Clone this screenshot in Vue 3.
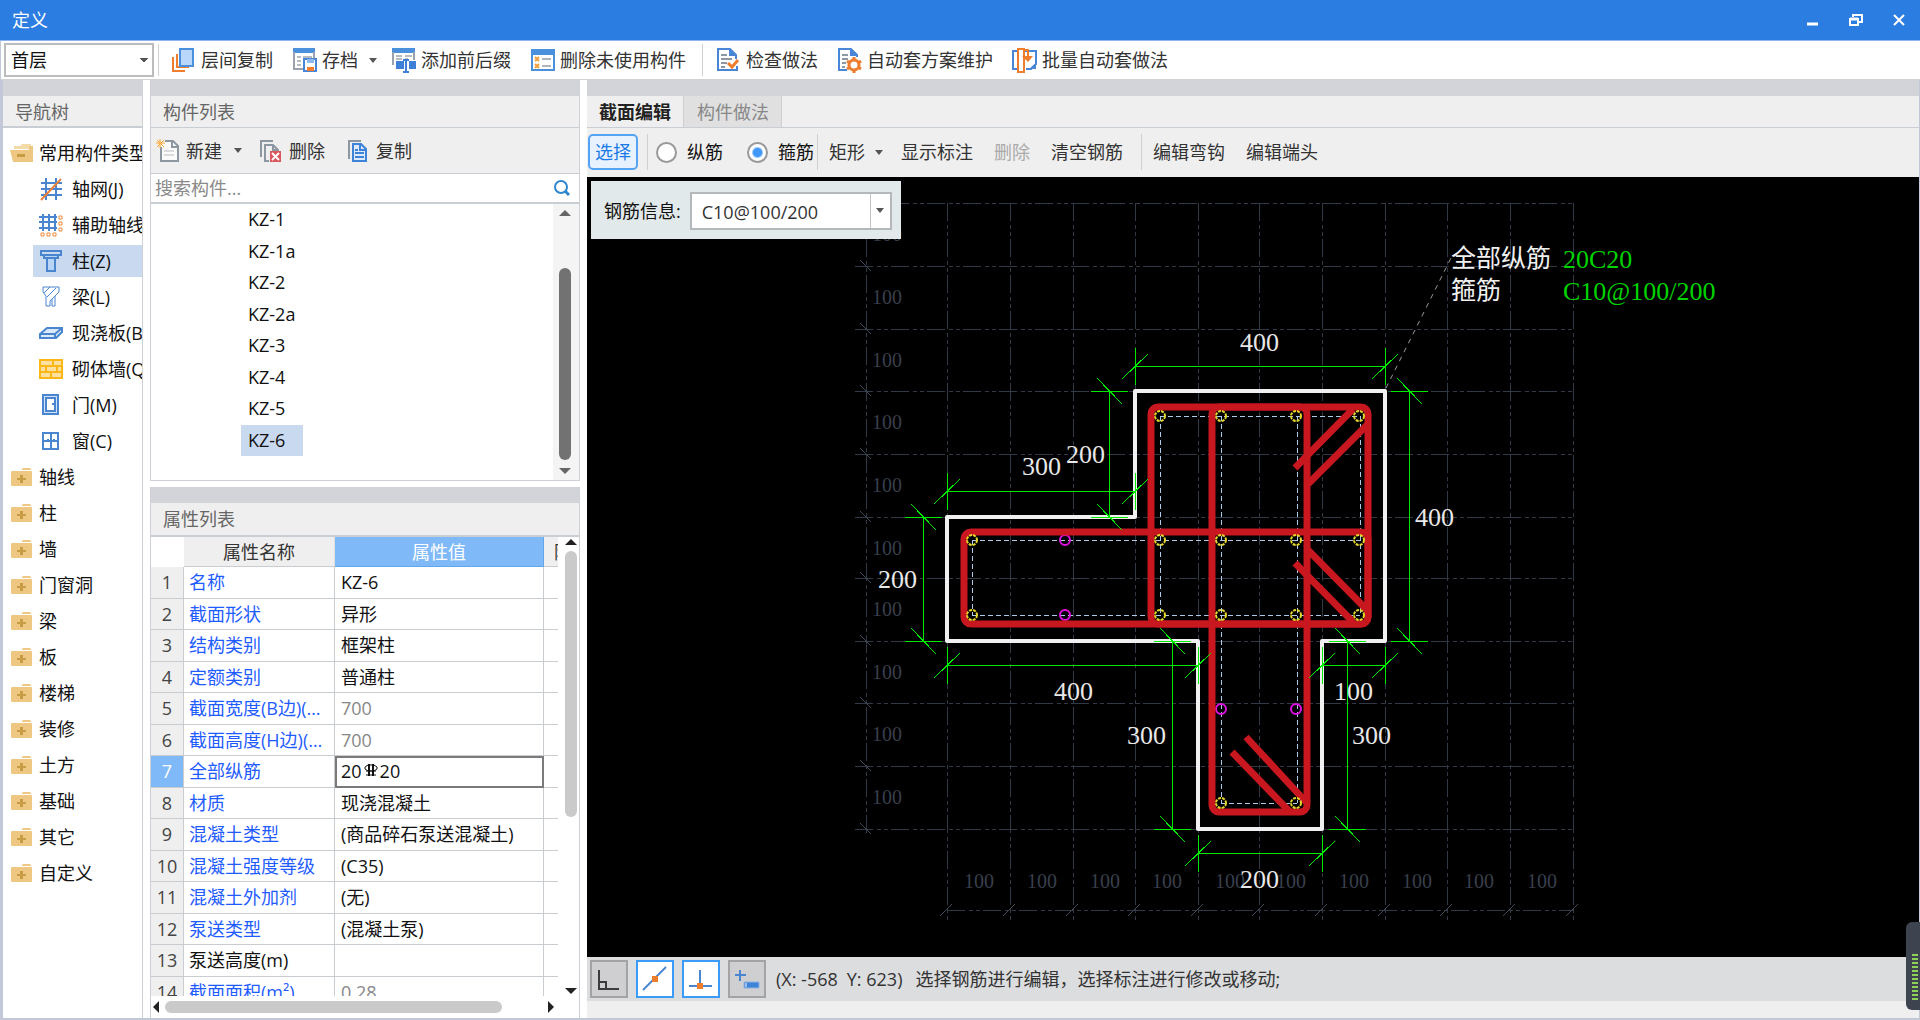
<script setup>
import { ref } from 'vue'

const barMode = ref('stirrup')
const floor = ref('首层')
const keyword = ref('')
const rebarInfo = ref('C10@100/200')

const commonTypes = [
  { icon: 'grid', label: '轴网(J)' },
  { icon: 'auxgrid', label: '辅助轴线(O)' },
  { icon: 'column', label: '柱(Z)', selected: true },
  { icon: 'beam', label: '梁(L)' },
  { icon: 'slab', label: '现浇板(B)' },
  { icon: 'wall', label: '砌体墙(Q)' },
  { icon: 'door', label: '门(M)' },
  { icon: 'window', label: '窗(C)' },
]
const groups = ['轴线', '柱', '墙', '门窗洞', '梁', '板', '楼梯', '装修', '土方', '基础', '其它', '自定义']

const components = ['KZ-1', 'KZ-1a', 'KZ-2', 'KZ-2a', 'KZ-3', 'KZ-4', 'KZ-5', 'KZ-6']

const properties = [
  { name: '名称', value: 'KZ-6' },
  { name: '截面形状', value: '异形' },
  { name: '结构类别', value: '框架柱' },
  { name: '定额类别', value: '普通柱' },
  { name: '截面宽度(B边)(mm)', value: '700', muted: true },
  { name: '截面高度(H边)(mm)', value: '700', muted: true },
  { name: '全部纵筋', value: '', rebar: ['20', '20'], active: true },
  { name: '材质', value: '现浇混凝土' },
  { name: '混凝土类型', value: '(商品碎石泵送混凝土)' },
  { name: '混凝土强度等级', value: '(C35)' },
  { name: '混凝土外加剂', value: '(无)' },
  { name: '泵送类型', value: '(混凝土泵)' },
  { name: '泵送高度(m)', value: '', plain: true },
  { name: '截面面积(m²)', value: '0.28', muted: true },
]

// Section drawing, in window pixels
const gridX = [947, 1010, 1073, 1135, 1198, 1259, 1322, 1385, 1447, 1510, 1573]
const gridY = [203, 266, 329, 391, 454, 517, 578, 641, 703, 766, 829]

const horizontalDims = [
  { y: 366, a: 1135, b: 1385 },
  { y: 491, a: 947, b: 1135 },
  { y: 665, a: 947, b: 1198 },
  { y: 665, a: 1322, b: 1385 },
  { y: 853, a: 1198, b: 1322 },
]
const verticalDims = [
  { x: 1109, a: 391, b: 517 },
  { x: 923, a: 517, b: 641 },
  { x: 1172, a: 641, b: 829 },
  { x: 1347, a: 641, b: 829 },
  { x: 1409, a: 391, b: 641 },
]
const dimTexts = [
  { x: 1240, y: 351, t: '400' },
  { x: 1066, y: 463, t: '200' },
  { x: 1022, y: 475, t: '300' },
  { x: 878, y: 588, t: '200' },
  { x: 1054, y: 700, t: '400' },
  { x: 1127, y: 744, t: '300' },
  { x: 1334, y: 700, t: '100' },
  { x: 1352, y: 744, t: '300' },
  { x: 1240, y: 888, t: '200' },
  { x: 1415, y: 526, t: '400' },
]
const cornerBars = [
  [1160, 416], [1221, 416], [1296, 416], [1359, 416],
  [972, 540], [1160, 540], [1221, 540], [1296, 540], [1359, 540],
  [972, 615], [1160, 615], [1221, 615], [1296, 615], [1359, 615],
  [1221, 803], [1296, 803],
]
const edgeBars = [[1065, 540], [1065, 615], [1221, 709], [1296, 709]]
</script>

<template>
  <div class="window">
    <header class="titlebar">
      <h1>定义</h1>
      <div class="win-buttons">
        <button type="button" aria-label="最小化">
          <svg width="14" height="14"><path d="M1 11h11" stroke="#fff" stroke-width="3" /></svg>
        </button>
        <button type="button" aria-label="还原">
          <svg width="14" height="14" fill="none" stroke="#fff" stroke-width="2"><path d="M4 4V2h9v7h-3M1 6h8v6H1z" /><path d="M1 6h8" stroke-width="3" /></svg>
        </button>
        <button type="button" aria-label="关闭">
          <svg width="14" height="14"><path d="M2 2l10 10M12 2L2 12" stroke="#fff" stroke-width="2" /></svg>
        </button>
      </div>
    </header>

    <nav class="toolbar">
      <select v-model="floor" class="floor" aria-label="楼层"><option>首层</option></select>
      <i class="sep first"></i>
      <button type="button" class="tool">
        <svg width="26" height="26" fill="none"><path d="M2 10v14h12M6 7v13h12" stroke="#ee7d2e" stroke-width="2" /><rect x="9" y="2" width="13" height="17" fill="#b9d7fb" stroke="#4a90dd" stroke-width="2" /></svg>
        层间复制
      </button>
      <button type="button" class="tool has-arrow">
        <svg width="26" height="26" fill="none"><path d="M1 1h22v5H1z" fill="#4a90dd" /><path d="M2 5v17h10M22 5v6" stroke="#9aa3ad" stroke-width="2" /><path d="M5 10h4M11 10h9M5 14h4M5 18h4" stroke="#b5bcc4" stroke-width="2" /><path d="M12 12h12v12H12z" fill="#fff" stroke="#4a86d8" stroke-width="2" /><path d="M15 12h7v4h-7z" fill="#8fb9ee" /><path d="M15 20h7v4h-7z" fill="#ee7d2e" /></svg>
        存档
        <i class="arrow"></i>
      </button>
      <button type="button" class="tool">
        <svg width="26" height="26" fill="none"><path d="M1 1h23v5H1z" fill="#4a90dd" /><path d="M2 5v13M23 5v8" stroke="#9aa3ad" stroke-width="2" /><path d="M5 9h6M5 12h6M14 9h7M14 12h3" stroke="#b5bcc4" stroke-width="2" /><path d="M5 14h8v8H5zM18 14h7v8h-7z" fill="#3d80d6" /><path d="M15 13v12M12 13h6M12 25h6" stroke="#3d80d6" stroke-width="2" /></svg>
        添加前后缀
      </button>
      <button type="button" class="tool">
        <svg width="26" height="26" fill="none"><path d="M2 3h22v20H2z" fill="#fff" stroke="#4a90dd" stroke-width="2" /><path d="M1 2h24v6H1z" fill="#4a90dd" /><path d="M5 10l4 4M9 10l-4 4M5 17l4 4M9 17l-4 4" stroke="#f2a13c" stroke-width="2" /><path d="M12 12h9M12 19h9" stroke="#aeb5bd" stroke-width="2" /></svg>
        删除未使用构件
      </button>
      <i class="sep"></i>
      <button type="button" class="tool">
        <svg width="26" height="26" fill="none"><path d="M20 12V8l-6-6H2v21h19v-4" stroke="#4a86d8" stroke-width="2" /><path d="M13 1l8 8h-8z" fill="#4a86d8" /><path d="M5 8h6M5 12h11M5 16h6M5 20h4" stroke="#8e98a5" stroke-width="2" /><path d="M12 16l4 4 6-7" stroke="#ee7d2e" stroke-width="3" /></svg>
        检查做法
      </button>
      <button type="button" class="tool">
        <svg width="26" height="26" fill="none"><path d="M20 10V8l-6-6H2v21h8" stroke="#4a86d8" stroke-width="2" /><path d="M13 1l8 8h-8z" fill="#4a86d8" /><path d="M5 8h6M5 12h6M5 16h4M5 20h3" stroke="#8e98a5" stroke-width="2" /><circle cx="17" cy="18" r="5" stroke="#ee7d2e" stroke-width="3" /><path d="M17 10v3M17 23v3M10 14l3 2M21 20l3 2M10 22l3-2M21 16l3-2" stroke="#ee7d2e" stroke-width="3" /></svg>
        自动套方案维护
      </button>
      <button type="button" class="tool">
        <svg width="26" height="26" fill="none"><path d="M5 4H1v18h4M12 4h12v13l-5 5h-5" stroke="#4a86d8" stroke-width="2" /><path d="M24 16v6h-7z" fill="#4a86d8" /><path d="M6 2h6v23H6zM12 3h4v8" stroke="#ee7d2e" stroke-width="2" /><path d="M10 9h11l-5 6z" fill="#ee7d2e" /></svg>
        批量自动套做法
      </button>
    </nav>

    <main class="body">
      <aside class="nav-panel">
        <div class="band"></div>
        <h2 class="panel-title thick">导航树</h2>
        <ul class="tree">
          <li class="group">
            <svg width="26" height="20"><path d="M5 6V3l6 0 2-2h9v5z" fill="#f3dba8" /><path d="M1 7h19V3h4v16H4z" fill="#eec883" /><path d="M8 11h8v3H8z" fill="#c89b45" /></svg>
            常用构件类型
          </li>
          <li v-for="t in commonTypes" :key="t.label" class="child">
            <span :class="['node', { selected: t.selected }]">
              <svg width="24" height="24" fill="none" stroke="#4a86d0" stroke-width="2">
                <g v-if="t.icon === 'grid'"><path d="M7 1v22M17 1v22M2 6h21M2 12h21M2 18h21" /><path d="M2 23L22 2" stroke="#e8803c" /></g>
                <g v-else-if="t.icon === 'auxgrid'"><path d="M4 1v17M10 1v17M16 1v17M0 4h18M0 9h18M0 15h18" /><path d="M20 3h3v3h-3zM20 9h3v3h-3zM20 15h3v3h-3zM2 20h3v3H2zM8 20h3v3H8zM14 20h3v3h-3z" stroke="#ee8a3c" stroke-width="1" /></g>
                <g v-else-if="t.icon === 'column'"><path d="M2 2h20v4H2z" /><path d="M5 6h14v3H5zM8 9h8v13H8z" fill="#b9d5f5" /></g>
                <g v-else-if="t.icon === 'beam'" stroke-width="1"><path d="M4 2h16v5l-4 4v10h-3v-7l-2 2v5H7V11L4 7z" /><path d="M5 8l6-6M8 12l9-9M11 16l9-9" /></g>
                <g v-else-if="t.icon === 'slab'"><path d="M1 13l7-6h15v4l-6 6H1z" fill="#dbe9fa" /><path d="M1 13h15l7-6M16 13v4" /></g>
                <g v-else-if="t.icon === 'wall'" stroke="#fbb717"><path d="M1 3h22v18H1z" fill="#fbe0a0" /><path d="M1 9h22M1 15h22M14 3v6M7 9v6M18 9v6M12 15v6" /></g>
                <g v-else-if="t.icon === 'door'"><path d="M4 2h15v19H4z" fill="#cfe2f9" /><path d="M7 5h9v13H7z" fill="#fff" /><path d="M13 11h2" /></g>
                <g v-else><path d="M4 4h15v16H4zM12 4v16M4 12h15" /><path d="M8 11h2M14 11h2" /></g>
              </svg>
              {{ t.label }}
            </span>
          </li>
          <li v-for="g in groups" :key="g" class="group">
            <svg width="26" height="20"><path d="M13 3V2l1-1h7l1 1v1z" fill="#eec883" /><rect x="2" y="4" width="21" height="15" rx="1" fill="#eec883" /><path d="M11 8h3v3h3v2h-3v3h-3v-3H8v-2h3z" fill="#c89b45" /></svg>
            {{ g }}
          </li>
        </ul>
      </aside>

      <section class="middle">
        <div class="list-panel">
          <div class="band"></div>
          <h2 class="panel-title">构件列表</h2>
          <div class="list-tools">
            <button type="button">
              <svg width="24" height="24" fill="none"><path d="M5 8v14h17V7l-5-5h-8" fill="#fafafa" stroke="#8d97a2" stroke-width="2" /><path d="M16 2v6h6" stroke="#8d97a2" stroke-width="2" /><path d="M8 12h10M8 16h10" stroke="#d8dadd" stroke-width="2" /><path d="M1 1l7 7M8 1L1 8M0 4h9M4 0v9" stroke="#fba52c" stroke-width="1" /></svg>
              新建
              <i class="arrow"></i>
            </button>
            <button type="button">
              <svg width="24" height="24" fill="none" stroke="#8d97a2" stroke-width="2"><path d="M2 18V2h12" /><path d="M10 22H6V6h8l5 5v2M14 6v5h5" /><path d="M11 12h11v11H11z" fill="#d9575c" stroke="none" /><path d="M13 14l7 7M20 14l-7 7" stroke="#fff" /></svg>
              删除
            </button>
            <button type="button">
              <svg width="24" height="24" fill="none"><path d="M3 20V2h12" stroke="#8d97a2" stroke-width="2" /><path d="M7 5h8l5 5v12H7z" fill="#dceafb" stroke="#3f83d8" stroke-width="2" /><path d="M14 5v6h6" stroke="#3f83d8" stroke-width="2" /><path d="M9 11h3M9 14h9M9 18h9" stroke="#3f83d8" stroke-width="2" /></svg>
              复制
            </button>
          </div>
          <div class="search">
            <input v-model="keyword" type="text" placeholder="搜索构件..." aria-label="搜索构件">
            <svg width="18" height="18" fill="none" stroke="#2f86cf" stroke-width="2"><circle cx="8" cy="8" r="6" /><path d="M12 12l4 4" stroke-width="3" /></svg>
          </div>
          <div class="list-area">
            <ul class="list">
              <li v-for="c in components" :key="c"><span :class="{ selected: c === 'KZ-6' }">{{ c }}</span></li>
            </ul>
            <div class="vbar list-bar">
              <i class="up"></i>
              <i class="thumb"></i>
              <i class="down"></i>
            </div>
          </div>
        </div>

        <div class="prop-panel">
          <div class="band"></div>
          <h2 class="panel-title thick">属性列表</h2>
          <div class="prop-main">
            <div class="prop-clip">
              <table>
                <colgroup><col class="c-num"><col class="c-name"><col class="c-value"><col class="c-extra"></colgroup>
                <thead>
                  <tr><th class="corner"></th><th>属性名称</th><th class="current">属性值</th><th class="extra">附加</th></tr>
                </thead>
                <tbody>
                  <tr v-for="(p, i) in properties" :key="p.name" :class="{ active: p.active }">
                    <th scope="row">{{ i + 1 }}</th>
                    <td :class="['name', { plain: p.plain }]">{{ p.name }}</td>
                    <td :class="['value', { muted: p.muted }]">
                      <div v-if="p.rebar" class="rebar">{{ p.rebar[0] }}<svg width="18" height="14" fill="none" stroke="#111"><path d="M6 2h6l3 2v2l-3 2H6L3 6V4z" /><path d="M7 1v12M11 1v12" stroke-width="2" /><path d="M4 8h10M4 12h10" /></svg>{{ p.rebar[1] }}</div>
                      <template v-else>{{ p.value }}</template>
                    </td>
                    <td></td>
                  </tr>
                </tbody>
              </table>
            </div>
            <div class="vbar prop-bar">
              <i class="up"></i>
              <i class="thumb"></i>
              <i class="down"></i>
            </div>
          </div>
          <div class="hbar">
            <i class="left"></i>
            <i class="thumb"></i>
            <i class="right"></i>
          </div>
        </div>
      </section>

      <section class="editor">
        <div class="band"></div>
        <div class="tabs">
          <button type="button" class="on">截面编辑</button>
          <button type="button" class="off">构件做法</button>
        </div>
        <div class="edit-tools">
          <button type="button" class="pick">选择</button>
          <i class="sep"></i>
          <label class="radio"><input v-model="barMode" type="radio" name="bar" value="long">纵筋</label>
          <label class="radio"><input v-model="barMode" type="radio" name="bar" value="stirrup">箍筋</label>
          <i class="sep tight"></i>
          <button type="button" class="shape">矩形<i class="arrow"></i></button>
          <button type="button">显示标注</button>
          <button type="button" disabled>删除</button>
          <button type="button">清空钢筋</button>
          <i class="sep wide"></i>
          <button type="button">编辑弯钩</button>
          <button type="button">编辑端头</button>
        </div>

        <div class="canvas">
          <svg class="drawing" width="100%" height="100%" fill="none">
            <g transform="translate(-587 -177)">
              <g class="grid-lines">
                <path v-for="x in gridX" :key="'x' + x" :d="`M${x} 203V921`" />
                <path v-for="y in gridY" :key="'y' + y" :d="`M855 ${y}H1573`" />
                <path d="M866 203V833M947 910H1573" />
              </g>
              <g class="grid-ticks">
                <path v-for="y in gridY" :key="'ty' + y" :d="`M860 ${y - 6}l11 11`" />
                <path v-for="x in gridX" :key="'tx' + x" :d="`M${x - 7} 916l12 -12`" />
              </g>
              <g class="grid-text">
                <text v-for="y in gridY.slice(0, 10)" :key="'gy' + y" x="872" :y="y + 38">100</text>
                <text v-for="x in gridX.slice(0, 10)" :key="'gx' + x" :x="x + 17" y="888">100</text>
              </g>

              <path class="leader" d="M1386 388L1451 258" />
              <path class="outline" d="M1135 391H1385V641H1322V829H1198V641H947V517H1135Z" />

              <g class="bar-lines">
                <path d="M1160 416H1360M972 540H1360M972 615H1360M1221 803H1297" />
                <path d="M972 540V615M1160 416V615M1221 416V803M1297 416V803M1360 416V615" />
              </g>
              <g class="edge-bars"><circle v-for="b in edgeBars" :key="b.join()" :cx="b[0]" :cy="b[1]" r="5" /></g>

              <g class="stirrups">
                <rect x="1151" y="407" width="217" height="217" rx="7" />
                <rect x="964" y="532" width="404" height="92" rx="7" />
                <rect x="1212" y="407" width="95" height="405" rx="7" />
                <path d="M1353 409L1295 468M1367 425L1308 484" />
                <path d="M1308 550L1367 610M1295 563L1353 622" />
                <path d="M1246 737L1306 802M1232 752L1290 812" />
              </g>
              <g class="corner-bars"><circle v-for="b in cornerBars" :key="b.join()" :cx="b[0]" :cy="b[1]" r="5" /></g>

              <g class="dims">
                <path v-for="d in horizontalDims" :key="'h' + d.y + d.a" :d="`M${d.a} ${d.y}H${d.b}M${d.a} ${d.y - 18}v37M${d.b} ${d.y - 18}v37M${d.a - 13} ${d.y + 13}l26 -25M${d.b - 13} ${d.y + 13}l26 -25`" />
                <path v-for="d in verticalDims" :key="'v' + d.x" :d="`M${d.x} ${d.a}V${d.b}M${d.x - 18} ${d.a}h37M${d.x - 18} ${d.b}h37M${d.x - 12} ${d.a - 13}l25 26M${d.x - 12} ${d.b - 13}l25 26`" />
              </g>
              <g class="dim-text"><text v-for="d in dimTexts" :key="d.x + '-' + d.y" :x="d.x" :y="d.y">{{ d.t }}</text></g>
              <g class="note-label"><text x="1451" y="267">全部纵筋</text><text x="1451" y="299">箍筋</text></g>
              <g class="note-value"><text x="1563" y="268">20C20</text><text x="1563" y="300">C10@100/200</text></g>
            </g>
          </svg>
          <form class="info" @submit.prevent>
            <label for="rebar-info">钢筋信息:</label>
            <div class="combo">
              <input id="rebar-info" v-model="rebarInfo" type="text">
              <button type="button" aria-label="展开"><i class="arrow"></i></button>
            </div>
          </form>
        </div>

        <footer class="status">
          <button type="button" aria-label="正交">
            <svg width="32" height="32" fill="none" stroke="#3c3c3c" stroke-width="2"><path d="M6 7v19h20M6 19h7v7" /></svg>
          </button>
          <button type="button" class="on" aria-label="最近点">
            <svg width="32" height="32" fill="none"><path d="M4 27L27 4" stroke="#4a86d0" stroke-width="2" /><rect x="13" y="13" width="6" height="6" fill="#ee7d2e" /></svg>
          </button>
          <button type="button" class="on" aria-label="垂点">
            <svg width="32" height="32" fill="none"><path d="M15 7v16M4 23h23" stroke="#4a86d0" stroke-width="2" /><rect x="12" y="20" width="6" height="6" fill="#ee7d2e" /></svg>
          </button>
          <button type="button" aria-label="动态输入">
            <svg width="32" height="32" fill="none"><path d="M9 7v11M4 12h11" stroke="#4a86d0" stroke-width="2" /><path d="M13 19h15v6H13z" fill="#3f83d8" stroke="#8fb4e2" /><path d="M15 20v4" stroke="#fff" /></svg>
          </button>
          <p><span>(X: -568</span><span>Y: 623)</span></p>
          <span>选择钢筋进行编辑，选择标注进行修改或移动;</span>
        </footer>
      </section>
    </main>

    <div class="meter"><i></i></div>
  </div>
</template>

<style>
body {
  margin: 0;
}
</style>

<style scoped>
.window {
  position: relative;
  display: flex;
  flex-direction: column;
  box-sizing: border-box;
  height: 100vh;
  min-height: 640px;
  overflow: hidden;
  background: #fff;
  color: #111;
  font: 18px/24px "Open Sans", "Noto Sans CJK SC", sans-serif;
}
.window *,
.window *::before {
  box-sizing: border-box;
}
ul {
  margin: 0;
  padding: 0;
  list-style: none;
}
button {
  display: flex;
  align-items: center;
  margin: 0;
  padding: 0;
  border: 0;
  background: none;
  color: #333;
  font: inherit;
  white-space: nowrap;
}
input,
select {
  margin: 0;
  font: inherit;
  color: inherit;
}
svg {
  display: block;
  flex: none;
}
.arrow {
  width: 0;
  border: 4px solid transparent;
  border-top: 5px solid #555;
  border-bottom: 0;
}

.titlebar {
  display: flex;
  flex: none;
  align-items: center;
  justify-content: space-between;
  height: 41px;
  padding: 0 14px 0 12px;
  border-bottom: 1px solid #8fb6ea;
  background: #2b7de1;
  color: #fff;
}
.titlebar h1 {
  margin: 0;
  font-size: 18px;
  font-weight: 400;
}
.win-buttons {
  display: flex;
  gap: 29px;
}

.toolbar {
  display: flex;
  flex: none;
  align-items: center;
  height: 39px;
  padding-left: 3px;
  border-bottom: 1px solid #d0d2d6;
  border-left: 1px solid #c2c8d8;
}
.floor {
  width: 150px;
  height: 34px;
  padding: 0 5px;
  border: 2px solid #bcbcbc;
  border-radius: 0;
  appearance: none;
  background:
    linear-gradient(to top right, transparent 50%, #555 50%) 134px 13px / 4px 5px no-repeat,
    linear-gradient(to top left, transparent 50%, #555 50%) 138px 13px / 4px 5px no-repeat,
    #fff;
}
.sep {
  flex: none;
  width: 1px;
  height: 32px;
  margin: 0 4px 0 5px;
  background: #d0d0d0;
}
.toolbar .sep {
  margin: 0 7px 0 3px;
}
.toolbar .sep.first {
  margin: 0 6px 0 4px;
}
.tool {
  gap: 4px;
  height: 32px;
  margin-right: 3px;
  padding: 0 10px 0 6px;
}
.tool.has-arrow {
  padding-right: 5px;
}
.tool .arrow {
  margin-left: 7px;
}

.body {
  display: flex;
  flex: 1;
  min-height: 0;
  border: solid #c2c8d8;
  border-width: 0 1px 2px 3px;
}
.band {
  flex: none;
  height: 16px;
  background: #d3d4d9;
}
.panel-title {
  flex: none;
  height: 32px;
  margin: 0;
  padding-left: 12px;
  border-bottom: 1px solid #c9cdd4;
  background: #efefef;
  color: #666;
  font-size: 18px;
  font-weight: 400;
  line-height: 32px;
}
.panel-title.thick {
  border-bottom-width: 2px;
}

.nav-panel {
  flex: none;
  width: 140px;
  overflow: hidden;
  border-right: 1px solid #cdd0d6;
}
.tree {
  padding-top: 7px;
}
.tree li {
  display: flex;
  align-items: center;
  height: 36px;
  white-space: nowrap;
}
.tree .group {
  gap: 4px;
  padding-left: 6px;
}
.tree .child {
  padding-left: 30px;
}
.node {
  display: flex;
  flex: 1;
  gap: 9px;
  align-items: center;
  height: 32px;
  padding-left: 6px;
}
.selected {
  background: #c9d9ef;
}

.middle {
  display: flex;
  flex: none;
  flex-direction: column;
  gap: 6px;
  width: 430px;
  margin: 0 7px;
}
.list-panel,
.prop-panel {
  display: flex;
  flex-direction: column;
  border: 1px solid #cdd0d6;
  border-top: 0;
}
.list-tools {
  display: flex;
  align-items: center;
  height: 45px;
  padding-left: 5px;
  background: #efefef;
}
.list-tools button {
  gap: 6px;
  margin-right: 21px;
}
.list-tools .arrow {
  margin: 0 -4px 0 6px;
}
.search {
  display: flex;
  align-items: center;
  height: 31px;
  padding: 0 8px 0 4px;
  border: solid #c9cdd4;
  border-width: 1px 0 2px;
}
.search input {
  flex: 1;
  min-width: 0;
  height: 26px;
  padding: 0;
  border: 0;
  outline: 0;
}
.search input::placeholder {
  color: #8a8a8a;
}
.list-area {
  display: flex;
  height: 276px;
}
.list {
  display: grid;
  flex: 1;
  grid-template-rows: repeat(8, minmax(0, 1fr));
  height: 252px;
}
.list li {
  display: flex;
  padding-left: 90px;
}
.list span {
  flex: none;
  min-width: 62px;
  padding: 3px 7px 0;
  white-space: nowrap;
}
.vbar {
  display: flex;
  flex: none;
  flex-direction: column;
  align-items: center;
}
.up,
.down {
  width: 0;
  border: 6px solid transparent;
}
.up {
  border-top: 0;
  border-bottom-color: #666;
}
.down {
  border-bottom: 0;
  border-top-color: #666;
}
.list-bar {
  width: 26px;
  padding: 6px 2px 6px 0;
  background: #f4f4f4;
}
.list-bar .thumb {
  flex: 1;
  width: 12px;
  margin: 52px 0 8px;
  border-radius: 6px;
  background: #727272;
}

.prop-panel {
  flex: 1;
  min-height: 0;
  border-bottom: 0;
}
.prop-panel .panel-title {
  height: 34px;
}
.prop-main {
  display: flex;
  flex: 1;
  min-height: 0;
}
.prop-clip {
  flex: 1;
  min-width: 0;
  overflow: hidden;
}
table {
  width: 520px;
  height: 471px;
  border-spacing: 0;
  table-layout: fixed;
}
.c-num {
  width: 33px;
}
.c-name {
  width: 151px;
}
.c-value {
  width: 209px;
}
th,
td {
  overflow: hidden;
  padding: 0 5px;
  border: solid #c9cdd1;
  border-width: 0 1px 1px 0;
  font-weight: 400;
  line-height: 24px;
  text-overflow: ellipsis;
  white-space: nowrap;
}
thead th {
  height: 30px;
  border-right-color: #e0e0e0;
  background: #efefef;
  color: #333;
}
thead .corner {
  border: 0;
  background: #fff;
}
thead .current {
  border-color: #63a6ec;
  background: #80b9f8;
  color: #fff;
}
thead .extra {
  padding-left: 10px;
  text-align: left;
}
tbody th {
  padding: 0;
  background: #efefef;
  color: #444;
}
.name {
  color: #1f5cff;
}
.name.plain {
  color: #111;
}
.value {
  padding-left: 6px;
}
.value.muted {
  color: #888;
}
.active th {
  background: #80b9f8;
  color: #fff;
}
.active .value {
  padding-left: 4px;
  border: 2px solid #7a7a7a;
}
.rebar {
  display: flex;
  height: 20px;
  line-height: 18px;
}
.rebar svg {
  margin-top: 1px;
}
.prop-bar {
  width: 21px;
  padding: 2px 0 2px 4px;
}
.prop-bar .up {
  border-bottom-color: #222;
}
.prop-bar .down {
  border-top-color: #222;
}
.prop-bar .thumb {
  width: 12px;
  height: 266px;
  margin: 6px 0 auto;
  border-radius: 6px;
  background: #cacaca;
}
.hbar {
  display: flex;
  flex: none;
  align-items: center;
  height: 22px;
  padding: 0 25px 0 2px;
}
.left,
.right {
  height: 0;
  border: 6px solid transparent;
}
.left {
  border-left: 0;
  border-right-color: #222;
}
.right {
  border-right: 0;
  border-left-color: #222;
}
.hbar .thumb {
  width: 337px;
  height: 12px;
  margin: 0 auto 0 6px;
  border-radius: 6px;
  background: #cacaca;
}

.editor {
  display: flex;
  flex: 1;
  flex-direction: column;
  min-width: 0;
  padding-bottom: 17px;
  background: #efefef;
}
.tabs {
  display: flex;
  flex: none;
  height: 32px;
  border-bottom: 1px solid #c9cdd4;
}
.tabs button {
  padding: 0 12px 0 13px;
  border-right: 1px solid #cfcfcf;
}
.tabs .on {
  padding-left: 12px;
  color: #222;
  font-weight: 700;
}
.tabs .off {
  background: #e0e0e0;
  color: #888;
}
.edit-tools {
  display: flex;
  flex: none;
  align-items: center;
  height: 49px;
  padding: 0 0 1px 1px;
}
.edit-tools button {
  margin-right: 21px;
}
.edit-tools .pick {
  height: 36px;
  margin-right: 4px;
  padding: 0 5px;
  border: 2px solid #55a3f5;
  border-radius: 5px;
  background: #e8f2fe;
  color: #1b7ae8;
}
.edit-tools button:disabled {
  color: #aaa;
}
.edit-tools .sep {
  height: 36px;
  margin: 0 8px 0 5px;
}
.edit-tools .sep.tight {
  margin: 0 11px 0 -21px;
}
.edit-tools .sep.wide {
  margin: 0 11px 0 -3px;
}
.edit-tools .arrow {
  margin-left: 10px;
}
.edit-tools .shape {
  margin-right: 18px;
}
.radio {
  display: flex;
  gap: 10px;
  align-items: center;
  margin-right: 24px;
}
.radio input {
  width: 21px;
  height: 21px;
  border: 2px solid #999;
  border-radius: 50%;
  appearance: none;
  background: #fff;
}
.radio input:checked {
  background: radial-gradient(circle, #3f97fa 4px, #fff 6px);
}

.canvas {
  position: relative;
  flex: 1;
  min-height: 0;
  overflow: hidden;
  background: #000;
}
.info {
  position: absolute;
  top: 4px;
  left: 4px;
  display: flex;
  gap: 9px;
  align-items: center;
  height: 58px;
  padding: 1px 9px 0 13px;
  background: #e1e9ea;
}
.combo {
  display: flex;
  width: 202px;
  height: 38px;
  border: 2px solid #b4b8ba;
  background: #fff;
}
.combo input {
  flex: 1;
  min-width: 0;
  padding: 2px 0 0 10px;
  border: 0;
  outline: 0;
  background: none;
  color: #333;
}
.combo button {
  justify-content: center;
  width: 20px;
  border-left: 1px solid #c4c4c4;
}
.grid-lines {
  stroke: #323946;
  stroke-dasharray: 18 4 4 3 4 3;
  shape-rendering: crispEdges;
}
.grid-ticks {
  stroke: #414a58;
}
.grid-text {
  fill: #383f4b;
  font: 20px "Liberation Serif", serif;
}
.leader {
  stroke: #999;
  stroke-dasharray: 5 5;
}
.outline {
  stroke: #f0f0f0;
  stroke-width: 4;
  stroke-linejoin: round;
}
.bar-lines {
  stroke: #aacdec;
  stroke-dasharray: 5 3;
  shape-rendering: crispEdges;
}
.stirrups {
  stroke: #c8171e;
  stroke-width: 7;
}
.corner-bars {
  stroke: #e6d82a;
  stroke-width: 2;
  stroke-dasharray: 3 1;
}
.edge-bars {
  stroke: #e010e0;
  stroke-width: 2;
}
.dims {
  stroke: #00ea00;
  shape-rendering: crispEdges;
}
.dim-text {
  fill: #e8e8e8;
  font: 26px "Liberation Serif", serif;
}
.note-label {
  fill: #f0f0f0;
  font: 25px "Noto Sans CJK SC", sans-serif;
}
.note-value {
  fill: #00d400;
  font: 26px "Liberation Serif", serif;
}

.status {
  display: flex;
  flex: none;
  gap: 8px;
  align-items: center;
  height: 44px;
  padding-left: 3px;
  background: #dcdddf;
  color: #333;
  white-space: nowrap;
}
.status button {
  justify-content: center;
  width: 38px;
  height: 38px;
  border: 2px solid #a3a3a5;
  background: #cfcfd1;
}
.status .on {
  border-color: #3b9bf8;
  background: #fff;
}
.status p {
  display: flex;
  gap: 9px;
  margin: 0 5px 0 2px;
}

.meter {
  position: absolute;
  right: 0;
  bottom: 10px;
  width: 14px;
  height: 88px;
  border-radius: 6px 0 0 6px;
  background: #3d4450;
}
.meter i {
  position: absolute;
  top: 32px;
  right: 2px;
  bottom: 8px;
  width: 6px;
  background: repeating-linear-gradient(#8fd05a 0 2px, #3d4450 2px 4px);
}
</style>
